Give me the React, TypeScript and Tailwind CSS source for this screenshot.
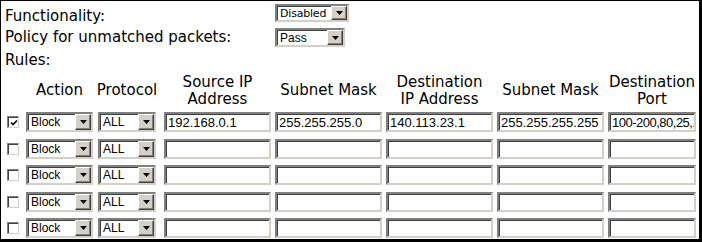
import React from 'react';

const label = { fontFamily: '"DejaVu Sans", Verdana, sans-serif' };
const arial = { fontFamily: '"Liberation Sans", Arial, sans-serif' };

function DropArrow() {
    return (
        <div className="flex h-full w-[16px] shrink-0 items-center justify-center border border-t-white border-l-white border-r-[#404040] border-b-[#404040] bg-[#d4d0c8] shadow-[inset_-1px_-1px_0_#808080]">
            <svg width="7" height="4" viewBox="0 0 7 4">
                <path d="M0 0h7L3.5 4z" fill="#000" />
            </svg>
        </div>
    );
}

function Select({ value, className, textClass }: { value: string; className: string; textClass: string }) {
    return (
        <div className={`flex shrink-0 items-stretch border-2 border-t-[#808080] border-l-[#808080] border-r-[#d4d0c8] border-b-[#d4d0c8] bg-white shadow-[inset_1px_1px_0_#404040] ${className}`}>
            <div className={`flex flex-1 items-center overflow-hidden pl-[3px] leading-none text-black ${textClass}`}>{value}</div>
            <DropArrow />
        </div>
    );
}

function TextBox({ value, width, tight }: { value?: string; width: string; tight?: boolean }) {
    return (
        <div
            className={`flex h-[20px] shrink-0 items-center overflow-hidden whitespace-nowrap border-2 border-t-[#808080] border-l-[#808080] border-r-[#d4d0c8] border-b-[#d4d0c8] bg-white pl-[2px] text-[13px] leading-none text-black shadow-[inset_1px_1px_0_#404040] ${tight ? 'tracking-[-0.5px]' : ''} ${width}`}
            style={arial}
        >
            {value}
        </div>
    );
}

function Checkbox({ checked }: { checked?: boolean }) {
    return (
        <div className="flex h-[12px] w-[12px] shrink-0 items-center justify-center border border-t-[#808080] border-l-[#808080] border-r-[#d4d0c8] border-b-[#d4d0c8] bg-white shadow-[inset_1px_1px_0_#404040]">
            {checked && (
                <svg width="8" height="8" viewBox="0 0 8 8" className="mt-[1px] ml-[1px]">
                    <path d="M1 3.5l2 2L7 1.5" stroke="#000" strokeWidth="1.6" fill="none" />
                </svg>
            )}
        </div>
    );
}

const rules = [
    { checked: true, src: '192.168.0.1', srcMask: '255.255.255.0', dst: '140.113.23.1', dstMask: '255.255.255.255', port: '100-200,80,25,110' },
    { checked: false },
    { checked: false },
    { checked: false },
    { checked: false },
];

export default function App() {
    return (
        <div className="h-[242px] w-[702px] border-t border-l border-r-[3px] border-b-[3px] border-black bg-white text-[15px] text-black" style={label}>
            {/* Settings */}
            <div className="pl-1">
                <div className="flex h-[24px] items-start">
                    <div className="mt-[6px] w-[270px] leading-[18px]">Functionality:</div>
                    <Select value="Disabled" className="mt-[3px] h-[18px] w-[74px]" textClass="text-[11px] tracking-[-0.2px]" />
                </div>
                <div className="flex h-[24px] items-start">
                    <div className="mt-[3px] w-[270px] leading-[18px]">Policy for unmatched packets:</div>
                    <Select value="Pass" className="mt-[3px] h-[19px] w-[70px]" textClass="text-[12px] [font-family:'Liberation_Sans',Arial,sans-serif]" />
                </div>
                <div className="h-[21px] pt-[2px] leading-[18px]">Rules:</div>
            </div>

            {/* Header */}
            <div className="flex h-[41px] items-center pl-[6px] text-center leading-[17px]">
                <div className="w-[12px] shrink-0" />
                <div className="ml-[7px] flex w-[67px] shrink-0 justify-center">Action</div>
                <div className="ml-[5px] flex w-[58px] shrink-0 justify-center">Protocol</div>
                <div className="ml-[8px] flex w-[107px] shrink-0 justify-center">Source IP<br />Address</div>
                <div className="ml-[4px] flex w-[107px] shrink-0 justify-center whitespace-nowrap">Subnet Mask</div>
                <div className="ml-[4px] flex w-[107px] shrink-0 justify-center">Destination<br />IP Address</div>
                <div className="ml-[4px] flex w-[107px] shrink-0 justify-center whitespace-nowrap">Subnet Mask</div>
                <div className="ml-[4px] flex w-[88px] shrink-0 justify-center whitespace-nowrap">Destination<br />Port</div>
            </div>

            {/* Rule rows */}
            <div className="pt-[1px]">
                {rules.map((r, i) => (
                    <div key={i} className="flex h-[26.5px] items-start pl-[6px]">
                        <div className="mt-[4px]">
                            <Checkbox checked={r.checked} />
                        </div>
                        <Select value="Block" className="ml-[7px] h-[20px] w-[67px]" textClass="text-[12px] [font-family:'Liberation_Sans',Arial,sans-serif]" />
                        <Select value="ALL" className="ml-[5px] h-[20px] w-[58px]" textClass="text-[12px] [font-family:'Liberation_Sans',Arial,sans-serif]" />
                        <div className="ml-[8px] flex gap-[4px]">
                            <TextBox value={r.src} width="w-[107px]" />
                            <TextBox value={r.srcMask} width="w-[107px]" />
                            <TextBox value={r.dst} width="w-[107px]" />
                            <TextBox value={r.dstMask} width="w-[107px]" />
                            <TextBox value={r.port} width="w-[88px]" tight />
                        </div>
                    </div>
                ))}
            </div>
        </div>
    );
}
